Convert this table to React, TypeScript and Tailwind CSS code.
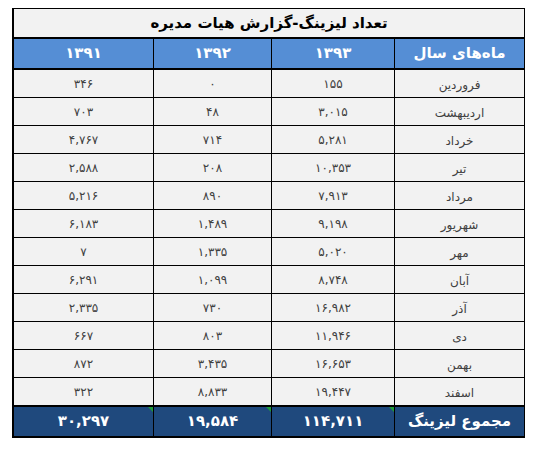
const fa = (s: string) => s.replace(/[0-9]/g, (d) => "۰۱۲۳۴۵۶۷۸۹"[Number(d)]);

const rows: [string, string, string, string][] = [
  ["فروردین", "155", "0", "346"],
  ["اردیبهشت", "3,015", "48", "703"],
  ["خرداد", "5,281", "714", "4,767"],
  ["تیر", "10,353", "208", "2,588"],
  ["مرداد", "7,913", "890", "5,216"],
  ["شهریور", "9,198", "1,489", "6,183"],
  ["مهر", "5,020", "1,335", "7"],
  ["آبان", "8,748", "1,099", "6,291"],
  ["آذر", "16,982", "730", "2,335"],
  ["دی", "11,946", "803", "667"],
  ["بهمن", "16,653", "3,435", "872"],
  ["اسفند", "19,447", "8,833", "322"],
];

const cols = "grid grid-cols-[130px_123px_118px_139px]";

// excel's little green error marker, top corner of the cell
const Flag = () => (
  <span className="absolute top-0 right-0 w-0 h-0 border-t-[5px] border-t-[#1f9e3a] border-l-[5px] border-l-transparent" />
);

export default function App() {
  return (
    <div className="bg-white w-[539px] h-[458px] pt-2 pl-3 font-['DejaVu_Sans',sans-serif]">
      <div
        dir="rtl"
        className="w-[513px] border-t border-r border-l-2 border-b-2 border-black bg-[#f2f2f2]"
      >
        <div className="h-[30px] flex items-center justify-center border-b-2 border-black text-[15px] font-bold text-black">
          تعداد لیزینگ-گزارش هیات مدیره
        </div>

        <div className={`${cols} h-[31px] bg-[#558ed5] text-white font-bold text-[15px] border-b-2 border-black`}>
          <div className="flex items-center justify-center border-l border-black tracking-[1px]">ماه‌های سال</div>
          <div className="flex items-center justify-center border-l border-black">{fa("1393")}</div>
          <div className="flex items-center justify-center border-l border-black">{fa("1392")}</div>
          <div className="flex items-center justify-center">{fa("1391")}</div>
        </div>

        {rows.map((r, i) => (
          <div
            key={r[0]}
            className={`${cols} h-[28px] text-[12px] text-[#404040] ${
              i === rows.length - 1 ? "h-[29px] border-b-2" : "border-b"
            } border-black`}
          >
            <div className="flex items-center justify-center border-l border-black pt-[2px]">{r[0]}</div>
            <div className="flex items-center justify-center border-l border-black">{fa(r[1])}</div>
            <div className="flex items-center justify-center border-l border-black">{fa(r[2])}</div>
            <div className="flex items-center justify-center">{fa(r[3])}</div>
          </div>
        ))}

        <div className={`${cols} h-[29px] bg-[#1f497d] text-white font-bold text-[15px]`}>
          <div className="flex items-center justify-center border-l border-black">مجموع لیزینگ</div>
          <div className="relative flex items-center justify-center border-l border-black">
            {fa("114,711")}
            <Flag />
          </div>
          <div className="relative flex items-center justify-center border-l border-black">
            {fa("19,584")}
            <Flag />
          </div>
          <div className="relative flex items-center justify-center">
            {fa("30,297")}
            <Flag />
          </div>
        </div>
      </div>
    </div>
  );
}
